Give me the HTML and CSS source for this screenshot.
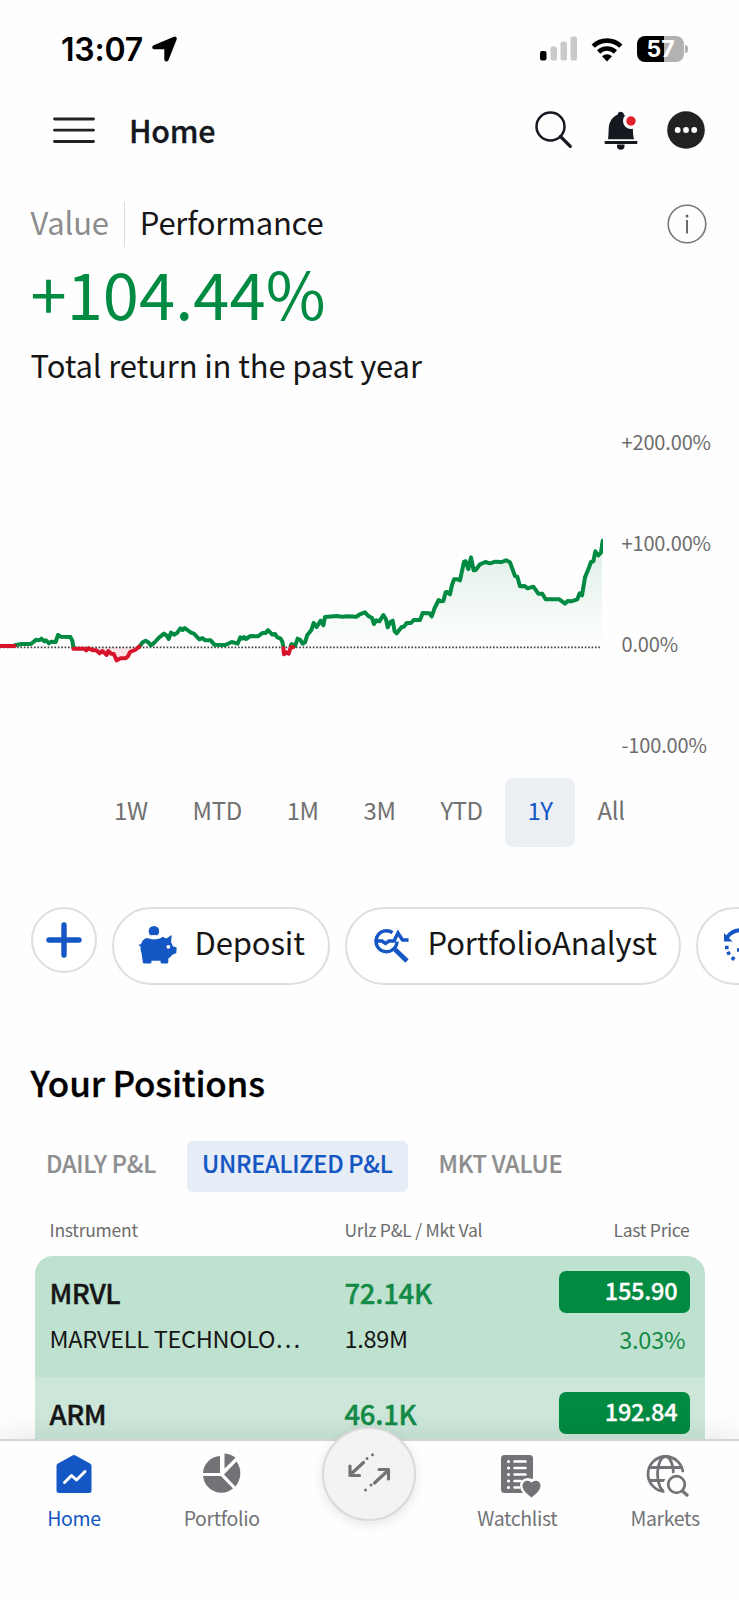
FILE: index.html
```html
<!DOCTYPE html>
<html lang="en">
<head>
    <meta charset="UTF-8">
    <meta name="viewport" content="width=device-width, initial-scale=1.0">
    <title>Home</title>
    <link rel="stylesheet" href="styles.css">
</head>
<body>
    <div class="phone">
        <div class="status-bar">
            <span class="time">13:07</span>
            <svg class="location" width="26" height="26" viewBox="0 0 26 26"><path stroke="#000" stroke-width="1.8" stroke-linejoin="round" d="M22.300 1.700 2 10.200c-1.400.6-1 2.200.4 2.200h10.800v10.800c0 1.500 1.900 1.900 2.500.5L23.800 3.200c.5-1.200-.4-2-1.500-1.500z"/></svg>
            <svg class="signal" width="38" height="26" viewBox="0 0 38 26">
                <rect x="0" y="15" width="6.500" height="9.500" rx="2"/>
                <g fill="#cacaca"><rect x="10.500" y="10.500" width="6.500" height="14" rx="2"/><rect x="20.500" y="5.500" width="6.500" height="19" rx="2"/><rect x="30.500" y="0.500" width="6.500" height="24" rx="2"/></g>
            </svg>
            <svg class="wifi" width="32" height="25" viewBox="0 0 32 25">
                <g fill="none" stroke="#000" stroke-width="4.600"><path d="M2.200 9.200a19.800 19.800 0 0 1 27.600 0"/><path d="M7.600 15a12 12 0 0 1 16.800 0"/></g>
                <path d="M16 24.500l-5-5.200a7.300 7.300 0 0 1 10 0z"/>
            </svg>
            <div class="battery"><span>57</span></div>
            <div class="battery-cap"></div>
        </div>

        <div class="header">
            <svg class="menu" width="42" height="28" viewBox="0 0 42 28"><path d="M1.500 3h39M1.500 14.200h39M1.500 25.500h39" stroke="#222" stroke-width="2.800" stroke-linecap="round"/></svg>
            <h1>Home</h1>
            <svg class="search" width="38" height="38" viewBox="0 0 38 38" fill="none" stroke="#15181f"><circle cx="15.500" cy="15.500" r="14" stroke-width="2.500"/><path d="M25.500 25.500l9.800 9.800" stroke-width="3.200" stroke-linecap="round"/></svg>
            <svg class="bell" width="34" height="39" viewBox="0 0 34 39">
                <path fill="#15181f" d="M4 28.200c.7-4 .4-8 .8-12 .5-6 4-10.500 8.700-12.500C14 1.500 15 .8 16.700.8s2.800.8 3.300 2.900c5 2.200 8.200 6.500 8.700 12.500.4 4 .2 8 1.300 12z"/>
                <rect x="0.500" y="30" width="33" height="3" rx="1.200" fill="#15181f"/>
                <path fill="#15181f" d="M13 33.500h7.500v1.500a3.700 3.700 0 0 1-7.500 0z"/>
                <circle cx="27" cy="10" r="8" fill="#fefefe"/><circle cx="27" cy="10" r="4.700" fill="#e0202f"/>
            </svg>
            <svg class="more" width="38" height="38" viewBox="0 0 38 38"><circle cx="19" cy="19" r="18.800" fill="#222"/><g fill="#fff"><circle cx="10.700" cy="19" r="2.900"/><circle cx="19" cy="19" r="2.900"/><circle cx="27.200" cy="19" r="2.900"/></g></svg>
        </div>

        <div class="summary">
            <div class="views">
                <span class="view">Value</span>
                <span class="view active">Performance</span>
                <svg width="40" height="40" viewBox="0 0 40 40"><circle cx="20" cy="20" r="18.800" fill="none" stroke="#777" stroke-width="1.600"/><circle cx="20" cy="12" r="1.500" fill="#666"/><path d="M20 16v13.500" stroke="#666" stroke-width="1.900"/></svg>
            </div>
            <div class="big">+104.44%</div>
            <div class="caption">Total return in the past year</div>
        </div>

        <div class="chart">
            <svg class="plot" width="603" height="160" viewBox="0 0 1809 480">
                <defs>
                    <linearGradient id="up" gradientUnits="userSpaceOnUse" x1="0" y1="50" x2="0" y2="382"><stop offset="0" stop-color="#018a41" stop-opacity=".13"/><stop offset="1" stop-color="#018a41" stop-opacity="0"/></linearGradient>
                </defs>
                <path fill="url(#up)" d="M890 382L900 362 908 372 915 367 922 345 934 328 941 308 950 321 962 302 970 316 975 291 1010 288 1075 290 1095 276 1112 290 1122 312 1138 304 1150 285 1165 322 1176 302 1190 340 1205 321 1230 308 1260 300 1270 279 1297 289 1315 240 1330 244 1338 215 1350 222 1362 178 1380 182 1392 125 1405 146 1413 112 1421 151 1440 132 1460 126 1518 121 1533 130 1545 168 1552 170 1560 199 1583 205 1600 200 1615 221 1637 238 1680 238 1695 250 1710 244 1732 238 1746 226 1755 172 1773 126 1786 94 1795 106 1803 97 1806 55V382z"/>
                <path fill="#fbe0e4" d="M220 382L263 387 310 395 340 400 350 420 380 415 400 393 418 382z"/>
                <path d="M0 382H1805" stroke="#444" stroke-width="5" stroke-dasharray="5 5.200"/>
                <g fill="none" stroke-width="12" stroke-linejoin="round" stroke-linecap="round">
                    <g stroke="#018a41">
                        <path d="M44 376L65 372 93 372 109 359 118 361 124 356 133 364 138 361 147 370 153 365 167 366 174 345 182 350 211 351 217 362 220 381"/>
                        <path d="M418 380L428 367 437 362 445 367 452 376 462 369 477 353 492 341 500 347 506 357 513 338 522 344 532 338 541 325 548 330 554 324 573 338 582 341 598 358 607 354 615 361 632 361 643 374 676 375 695 366 713 371 721 352 727 356 732 351 738 357 751 348 774 349 787 339 797 339 804 330 817 344 825 342 832 352 841 355 847 365 850 380"/>
                        <path d="M872 378L875 372 885 378 893 356 901 360 908 371 915 367 922 345 934 330 941 309 950 321 962 302 970 316 975 291 1010 288 1026 290 1044 289 1070 290 1079 283 1095 277 1105 288 1116 294 1122 312 1129 301 1138 304 1150 285 1158 298 1163 322 1172 305 1178 302 1184 334 1190 340 1205 321 1212 320 1220 309 1233 309 1241 300 1260 300 1268 279 1288 280 1295 289 1304 264 1316 240 1322 244 1330 243 1337 217 1342 216 1350 223 1356 195 1362 178 1373 178 1380 181 1392 125 1397 124 1405 147 1413 112 1421 151 1427 150 1440 133 1456 126 1470 130 1486 125 1505 126 1518 121 1530 127 1545 168 1552 170 1560 199 1574 198 1583 205 1600 200 1615 221 1627 221 1637 238 1678 238 1695 251 1703 243 1713 244 1732 238 1739 220 1746 226 1755 172 1768 140 1773 126 1780 124 1786 94 1795 106 1803 98 1808 62"/>
                    </g>
                    <g stroke="#d8142a">
                        <path d="M-6 378H44"/>
                        <path d="M220 386L252 386 259 391 265 385 280 391 289 391 299 400 307 393 320 405 325 393 333 401 341 402 350 421 362 415 377 415 384 409 390 396 405 390 418 380"/>
                        <path d="M850 384L852 403 858 397 866 401 872 382 880 382"/>
                    </g>
                </g>
            </svg>
            <div class="axis">
                <span>+200.00%</span>
                <span>+100.00%</span>
                <span>0.00%</span>
                <span>-100.00%</span>
            </div>
        </div>

        <div class="ranges">
            <span>1W</span><span>MTD</span><span>1M</span><span>3M</span><span>YTD</span><span class="active">1Y</span><span>All</span>
        </div>

        <div class="actions">
            <div class="action plus">
                <svg width="36" height="36" viewBox="0 0 36 36"><path d="M18 3v30M3 18h30" stroke="#1456c3" stroke-width="5.400" stroke-linecap="round"/></svg>
            </div>
            <div class="action deposit">
                <svg width="40" height="40" viewBox="0 0 40 40" fill="#1456c3">
                    <path d="M12.500 10.300a5.300 5.300 0 1 1 6.800 0q-3.400-.8-6.800 0z"/>
                    <path d="M7.500 13.300h2.500q5.800 2.200 12.500 0l2-1.600 3.700 1.700 5.600-3.500-.8 7.300q1.400 1.800 1.800 4l3.900 1.300-.4 5.500-4.300 2q-1.500 2.500-3.700 3.500V37q0 1.500-1.500 1.500H24q-1.500 0-1.500-1.500v-1.200h-9V37q0 1.500-1.500 1.500H6.500q-1.500 0-1.700-1.500L3.500 28Q2.300 25 2.500 21.500L.3 19.800l2.700-.6q1.200-4 4.500-5.900z"/>
                    <circle cx="30.300" cy="21.800" r="1.900" fill="#fff"/>
                </svg>
                <span>Deposit</span>
            </div>
            <div class="action analyst">
                <svg width="34" height="34" viewBox="0 0 34 34" fill="none" stroke="#1456c3" stroke-width="3.400">
                    <path d="M17.500 3.600A10.500 10.500 0 1 0 22 12.500"/>
                    <path d="M2 12h5l3.500 2.500 3.500-2.500h5l4-8 4.500 7H33.500"/>
                    <path d="M20 20.500l12 11.500" stroke-width="4.600"/>
                </svg>
                <span>PortfolioAnalyst</span>
            </div>
            <div class="action more-action">
                <svg width="36" height="36" viewBox="0 0 36 36" fill="none" stroke="#1456c3">
                    <path d="M3 9.500A17 17 0 0 1 18 2.200a16 16 0 0 1 0 32" stroke-width="3.800"/>
                    <path d="M0 5v8.500h8.500z" fill="#1456c3" stroke="none"/>
                    <path d="M1 19.500h3.600M3 26l3.200-1.600M8 32l2.200-3" stroke-width="3.400"/>
                    <path d="M13 22h5v-11" stroke-width="3.400"/>
                </svg>
            </div>
        </div>

        <h2>Your Positions</h2>
        <div class="tabs">
            <span>DAILY P&amp;L</span><span class="active">UNREALIZED P&amp;L</span><span>MKT VALUE</span>
        </div>

        <div class="row columns">
            <span>Instrument</span><span>Urlz P&amp;L / Mkt Val</span><span>Last Price</span>
        </div>
        <div class="positions">
            <div class="row position">
                <div><div class="name">MRVL</div><div class="sub">MARVELL TECHNOLO…</div></div>
                <div><div class="name gain">72.14K</div><div class="sub">1.89M</div></div>
                <div><div class="price">155.90</div><div class="change">3.03%</div></div>
            </div>
            <div class="row position light">
                <div><div class="name">ARM</div></div>
                <div><div class="name gain">46.1K</div></div>
                <div><div class="price">192.84</div></div>
            </div>
        </div>

        <div class="nav">
            <div class="nav-item active">
                <svg width="44" height="44" viewBox="0 0 44 44"><path fill="#1456c3" d="M20.500 3.500q1.500-.9 3 0l14.500 8q1.500.8 1.500 2.500v24.500q0 2.500-2.500 2.500H7q-2.500 0-2.500-2.500V14q0-1.700 1.500-2.500z"/><path d="M12.500 30.500l7-7 5 4.500 8.500-8.500" fill="none" stroke="#fff" stroke-width="3" stroke-linecap="round" stroke-linejoin="round"/></svg>
                <span>Home</span>
            </div>
            <div class="nav-item">
                <svg width="44" height="44" viewBox="0 0 44 44" fill="#727377"><path d="M20 4v17H3A18 18 0 0 1 20 4zM3 24h17.800l12.200 12.500A18.500 18.500 0 0 1 3 24zM24.500 1.500a20 20 0 0 1 11 4.200L24.500 16.500zM36.500 9.500c5.500 7.500 5 18-1.200 25L24 22.500z"/></svg>
                <span>Portfolio</span>
            </div>
            <div class="nav-item">
                <div class="fab">
                    <svg width="44" height="42" viewBox="0 0 44 42" fill="none" stroke="#727377" stroke-width="3.200" stroke-linecap="round" stroke-linejoin="round"><path d="M16.500 9.500L3 22M3 13v9.500h9.500M27.500 30L41.500 17M32 16.500h9.500V26"/><path d="M20 5.500h.01M25.500 1.800h.01M18.500 37h.01M24 32h.01" stroke-width="3"/></svg>
                </div>
            </div>
            <div class="nav-item">
                <svg width="44" height="44" viewBox="0 0 44 44">
                    <rect x="6" y="3" width="32" height="38" rx="3.500" fill="#727377"/>
                    <g stroke="#fff" stroke-width="2.600" stroke-linecap="round"><path d="M19.500 9.500h11M19.500 16h11M19.500 22.500h11M19.500 29h6M19.500 35.500h5"/><path d="M13.500 9.500h.01M13.500 16h.01M13.500 22.500h.01M13.500 29h.01M13.500 35.500h.01" stroke-width="3.200"/></g>
                    <path d="M36.500 45.500c-5-4-9-7.500-9-11.800 0-5.500 6.500-6.500 9-3 2.500-3.500 9-2.500 9 3 0 4.300-4 7.800-9 11.800z" fill="#727377" stroke="#fff" stroke-width="5" paint-order="stroke"/>
                </svg>
                <span>Watchlist</span>
            </div>
            <div class="nav-item">
                <svg width="44" height="44" viewBox="0 0 44 44" fill="none" stroke="#727377" stroke-width="2.800">
                    <circle cx="22.500" cy="22" r="17.500"/>
                    <ellipse cx="22.500" cy="22" rx="8" ry="17.500"/>
                    <path d="M6.500 15.500h32M6.500 28.500h32"/>
                    <path d="M20.500 33.500a13 13 0 0 1 13-13L44 20v24H22z" fill="#fefefe" stroke="none"/>
                    <circle cx="33.500" cy="32.500" r="8.300"/>
                    <path d="M39.500 39l5.500 5" stroke-width="3.200"/>
                </svg>
                <span>Markets</span>
            </div>
        </div>
    </div>
</body>
</html>
```
FILE: styles.css
```css
* {
    box-sizing: border-box;
}

body {
    margin: 0;
    background: #fefefe;
    color: #161616;
    font-family: "Noto Sans CJK SC", "Open Sans", sans-serif;
}

h1, h2 {
    margin: 0;
    font-weight: 500;
    -webkit-text-stroke: 0.3px;
}

svg {
    display: block;
    flex: none;
    overflow: visible;
}

.phone {
    width: 739px;
    height: 1600px;
    overflow: hidden;
    display: flex;
    flex-direction: column;
}

.phone > * {
    flex: none;
}

/* Status bar */
.status-bar {
    height: 98px;
    padding: 0 51px 0 61px;
    display: flex;
    align-items: center;
    color: #000;
    font-family: Inter, sans-serif;
}

.time {
    width: 91px;
    padding-top: 1px;
    font-size: 32px;
    font-weight: 600;
    letter-spacing: -0.2px;
}

.signal {
    margin-left: auto;
}

.wifi {
    margin-left: 13px;
}

.battery {
    width: 47px;
    height: 26px;
    margin-left: 14px;
    border-radius: 8px;
    background: linear-gradient(90deg, #000 57%, #b2b2b2 57%);
    color: #fff;
    font-size: 23px;
    font-weight: 700;
    line-height: 27px;
    text-align: center;
}

.battery-cap {
    width: 3px;
    height: 8px;
    margin-left: 1px;
    border-radius: 0 4px 4px 0;
    background: #b2b2b2;
}

/* Header */
.header {
    height: 65px;
    padding: 0 34.500px 0 53px;
    display: flex;
    align-items: center;
}

.header svg {
    margin-top: -1px;
}

.header h1 {
    margin: -2px auto 0 34px;
    font-size: 30.500px;
    line-height: 44px;
    letter-spacing: -0.3px;
    color: #15181f;
}

.header .bell {
    margin-left: 31px;
}

.header .more {
    margin-left: 29px;
}

/* Summary */
.summary {
    height: 257px;
    padding: 39px 32.500px 0 30.500px;
}

.views {
    height: 45px;
    display: flex;
    align-items: center;
}

.view {
    height: 45px;
    font-size: 31px;
    line-height: 39px;
    letter-spacing: -0.2px;
    color: #8c8c8c;
}

.view.active {
    margin-left: 15px;
    padding-left: 15px;
    border-left: 1.500px solid #ddd;
    color: #161616;
}

.views svg {
    margin: -1px 0 0 auto;
}

.big {
    margin-top: 8px;
    font-size: 65px;
    line-height: 74px;
    letter-spacing: 0.1px;
    color: #018a41;
}

.caption {
    margin-top: 11px;
    font-size: 31px;
    line-height: 50px;
    letter-spacing: -0.14px;
}

/* Chart */
.chart {
    height: 358px;
    display: flex;
}

.plot {
    margin-top: 100px;
    overflow: hidden;
}

.axis {
    margin: 6.500px 0 0 18.500px;
    display: flex;
    flex-direction: column;
    gap: 71.200px;
    font-size: 20px;
    line-height: 30px;
    letter-spacing: -0.15px;
    color: #6c6c6c;
}

.ranges {
    height: 69px;
    display: flex;
    justify-content: center;
    font-size: 24px;
    line-height: 64px;
    letter-spacing: -0.4px;
    color: #707070;
}

.ranges span {
    padding: 0 22.600px 0 22.300px;
}

.ranges .active {
    border-radius: 8px;
    background: #ebeff4;
    color: #1456c3;
}

/* Quick actions */
.actions {
    margin-top: 60px;
    padding-left: 30.500px;
    height: 78px;
    display: flex;
    align-items: flex-start;
    gap: 15px;
    overflow: hidden;
}

.action {
    flex: none;
    width: 218px;
    height: 78px;
    padding-left: 25px;
    display: flex;
    align-items: center;
    border: 2px solid #dedede;
    border-radius: 39px;
    background: #fff;
    font-size: 31px;
    line-height: 40px;
    letter-spacing: -0.15px;
}

.action span {
    margin: -8px 0 0 17px;
}

.action.plus {
    width: 66px;
    height: 66px;
    padding: 0;
    justify-content: center;
}

.action.deposit {
    padding-left: 24px;
}

.deposit svg {
    margin-top: -2px;
}

.action.analyst {
    width: 336px;
    padding-left: 28px;
}

.analyst span {
    margin-left: 19px;
}

.action.more-action {
    padding-left: 26px;
}

/* Positions */
h2 {
    margin: 72px 0 0 30.500px;
    font-size: 35px;
    line-height: 50px;
    letter-spacing: -0.2px;
    color: #000;
}

.tabs {
    margin: 34px 0 0 30.500px;
    display: flex;
    gap: 15px;
    font-size: 23.500px;
    font-weight: 500;
    line-height: 45px;
    letter-spacing: -0.25px;
    color: #8e8e8e;
    -webkit-text-stroke: 0.2px;
}

.tabs span {
    height: 51px;
    padding: 0 15.500px;
    border-radius: 6px;
}

.tabs .active {
    background: #e7edf6;
    color: #1456c3;
}

.row {
    display: grid;
    grid-template-columns: 295px 214px 131px;
}

.columns {
    margin: 24px 0 0 49.500px;
    height: 40px;
    font-size: 17.500px;
    line-height: 28px;
    letter-spacing: -0.25px;
    color: #6c6c6c;
}

.columns span:last-child {
    text-align: right;
}

.positions {
    width: 670px;
    height: 183px;
    margin-left: 34.500px;
    border-radius: 18px 18px 0 0;
    overflow: hidden;
}

.position {
    height: 121px;
    padding: 15px 15px 0;
    background: #bfe2d0;
}

.light {
    background: #cce7da;
}

.name {
    font-size: 27.500px;
    font-weight: 500;
    line-height: 42px;
    letter-spacing: -0.45px;
    -webkit-text-stroke: 0.4px;
}

.gain {
    color: #138a46;
    letter-spacing: -0.3px;
}

.sub {
    padding-top: 2px;
    font-size: 23.500px;
    line-height: 46px;
    letter-spacing: -0.3px;
}

.price {
    height: 42px;
    padding-right: 12px;
    border-radius: 7px;
    background: #018a41;
    color: #fff;
    font-size: 23.500px;
    font-weight: 500;
    line-height: 38px;
    letter-spacing: -0.2px;
    text-align: right;
    -webkit-text-stroke: 0.3px;
}

.change {
    padding-right: 4px;
    color: #138a46;
    font-size: 23.500px;
    line-height: 52px;
    letter-spacing: -0.2px;
    text-align: right;
}

/* Bottom navigation */
.nav {
    position: relative;
    height: 161px;
    display: flex;
    border-top: 2px solid #d4d6d5;
    background: #fefefe;
    box-shadow: 0 -4px 26px rgba(0, 0, 0, 0.09);
}

.nav-item {
    flex: 1;
    padding-top: 11px;
    display: flex;
    flex-direction: column;
    align-items: center;
    font-size: 19.500px;
    line-height: 30px;
    letter-spacing: -0.35px;
    color: #727377;
}

.nav-item.active {
    color: #1456c3;
}

.nav-item span {
    margin-top: 7px;
}

.fab {
    width: 94px;
    height: 94px;
    margin-top: -25px;
    display: flex;
    align-items: center;
    justify-content: center;
    border: 2px solid #dadada;
    border-radius: 50%;
    background: #f3f3f3;
    box-shadow: 0 3px 12px rgba(0, 0, 0, 0.1);
}
```
